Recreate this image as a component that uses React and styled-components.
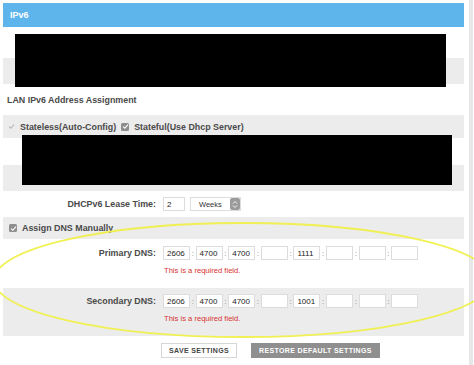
import styled, { createGlobalStyle } from "styled-components";

const GlobalStyle = createGlobalStyle`
  html, body {
    margin: 0;
    padding: 0;
    background: #fff;
    font-family: "Liberation Sans", Arial, sans-serif;
  }
`;

const Page = styled.div`
  position: relative;
  width: 474px;
  height: 365px;
  overflow: hidden;
  display: flex;
  background: #fff;
`;

const Main = styled.div`
  width: 461px;
  padding: 3px 0 0 3px;
  display: flex;
  flex-direction: column;
`;

const Scroll = styled.div`
  width: 4px;
  margin-left: 5px;
  background: #e7e7e9;
`;

const Header = styled.div`
  height: 24px;
  background: #5eb5eb;
  color: #fff;
  font-weight: bold;
  font-size: 9px;
  display: flex;
  align-items: center;
  padding-left: 7px;
`;

const Row = styled.div`
  height: ${(p) => p.$h}px;
  background: ${(p) => (p.$shade ? "#ececec" : "#fff")};
  display: flex;
  align-items: ${(p) => (p.$top ? "flex-start" : "center")};
  padding-left: ${(p) => p.$pad || 0}px;
  box-sizing: border-box;
  font-size: 8.9px;
  font-weight: bold;
  color: #4a4a4a;
`;

const Redact = styled.div`
  position: absolute;
  background: #000;
`;

const CheckItem = styled.label`
  display: flex;
  align-items: center;
  gap: 5px;
  margin-right: 5px;
`;

const Box = styled.span`
  width: 8px;
  height: 8px;
  border-radius: 1.5px;
  background: ${(p) => (p.$light ? "transparent" : "#8e8e8e")};
  display: flex;
  align-items: center;
  justify-content: center;
`;

const Field = styled.div`
  display: grid;
  grid-template-columns: 153px auto;
  column-gap: 7px;
  row-gap: 6px;
  align-items: center;
`;

const Label = styled.div`
  text-align: right;
`;

const Input = styled.div`
  width: ${(p) => p.$w || 27}px;
  height: 14px;
  box-sizing: border-box;
  border: 1px solid #dcdcdc;
  background: #fff;
  font-size: 8px;
  font-weight: normal;
  color: #222;
  padding-left: 3px;
  display: flex;
  align-items: center;
`;

const Inline = styled.div`
  display: flex;
  align-items: center;
`;

const Select = styled.div`
  margin-left: 5px;
  width: 51px;
  height: 14px;
  box-sizing: border-box;
  border: 1px solid #dcdcdc;
  background: #fff;
  font-size: 7.5px;
  font-weight: normal;
  color: #333;
  display: flex;
  align-items: center;
  justify-content: space-between;
  padding-left: 8px;
`;

const Spin = styled.span`
  width: 10px;
  height: 12px;
  background: #9b9b9b;
  border-radius: 2px;
  display: flex;
  align-items: center;
  justify-content: center;
`;

const Colon = styled.span`
  width: 5.6px;
  text-align: center;
  font-size: 8px;
  font-weight: normal;
  color: #888;
`;

const Error = styled.div`
  grid-column: 2;
  font-size: 7.6px;
  font-weight: normal;
  color: #d8322f;
  padding-left: 1px;
`;

const Buttons = styled.div`
  display: flex;
  gap: 14px;
  padding: 7px 0 0 158px;
`;

const Button = styled.div`
  height: 15px;
  box-sizing: border-box;
  padding: 0 ${(p) => p.$px}px;
  display: flex;
  align-items: center;
  font-size: 7px;
  font-weight: bold;
  letter-spacing: 0.35px;
  background: ${(p) => (p.$primary ? "#8f8f8f" : "#fff")};
  color: ${(p) => (p.$primary ? "#fff" : "#444")};
  border: 1px solid ${(p) => (p.$primary ? "#8f8f8f" : "#d6d6d6")};
`;

const Overlay = styled.svg`
  position: absolute;
  left: 0;
  top: 0;
  pointer-events: none;
`;

const Check = ({ color }) => (
  <svg width="7" height="7" viewBox="0 0 8 8">
    <path d="M1.3 4.2 L3.2 6 L6.8 1.8" fill="none" stroke={color} strokeWidth="1.3" />
  </svg>
);

function DnsRow({ label, groups, shade }) {
  return (
    <Row $h={shade ? 48 : 49} $shade={shade} $top>
      <Field style={{ paddingTop: shade ? 6 : 7 }}>
        <Label>{label}</Label>
        <Inline>
          {groups.map((g, i) => (
            <Inline key={i}>
              {i > 0 && <Colon>:</Colon>}
              <Input>{g}</Input>
            </Inline>
          ))}
        </Inline>
        <Error>This is a required field.</Error>
      </Field>
    </Row>
  );
}

export default function App() {
  return (
    <Page>
      <GlobalStyle />
      <Main>
        <Header>IPv6</Header>
        <Row $h={31} />
        <Row $h={26} $shade />
        <Row $h={31} $pad={4}>LAN IPv6 Address Assignment</Row>
        <Row $h={23} $shade $pad={4}>
          <CheckItem>
            <Box $light>
              <Check color="#b5b5b5" />
            </Box>
            Stateless(Auto-Config)
          </CheckItem>
          <CheckItem>
            <Box>
              <Check color="#fff" />
            </Box>
            Stateful(Use Dhcp Server)
          </CheckItem>
        </Row>
        <Row $h={27} />
        <Row $h={26} $shade />
        <Row $h={26}>
          <Field>
            <Label>DHCPv6 Lease Time:</Label>
            <Inline>
              <Input $w={22}>2</Input>
              <Select>
                Weeks
                <Spin>
                  <svg width="6" height="9" viewBox="0 0 6 9">
                    <path d="M1 3.5 L3 1.5 L5 3.5 M1 5.5 L3 7.5 L5 5.5" fill="none" stroke="#fff" strokeWidth="0.9" />
                  </svg>
                </Spin>
              </Select>
            </Inline>
          </Field>
        </Row>
        <Row $h={22} $shade $pad={6}>
          <CheckItem>
            <Box>
              <Check color="#fff" />
            </Box>
            Assign DNS Manually
          </CheckItem>
        </Row>
        <DnsRow label="Primary DNS:" groups={["2606", "4700", "4700", "", "1111", "", "", ""]} />
        <DnsRow label="Secondary DNS:" shade groups={["2606", "4700", "4700", "", "1001", "", "", ""]} />
        <Buttons>
          <Button $px={7}>SAVE SETTINGS</Button>
          <Button $px={7} $primary>RESTORE DEFAULT SETTINGS</Button>
        </Buttons>
      </Main>
      <Scroll />
      <Redact style={{ left: 15, top: 34, width: 431, height: 53 }} />
      <Redact style={{ left: 22, top: 135, width: 430, height: 50 }} />
      <Overlay width="474" height="365" viewBox="0 0 474 365">
        <ellipse cx="243" cy="280" rx="249" ry="57" fill="none" stroke="#f0f046" strokeWidth="1.8" opacity="0.92" />
      </Overlay>
    </Page>
  );
}
